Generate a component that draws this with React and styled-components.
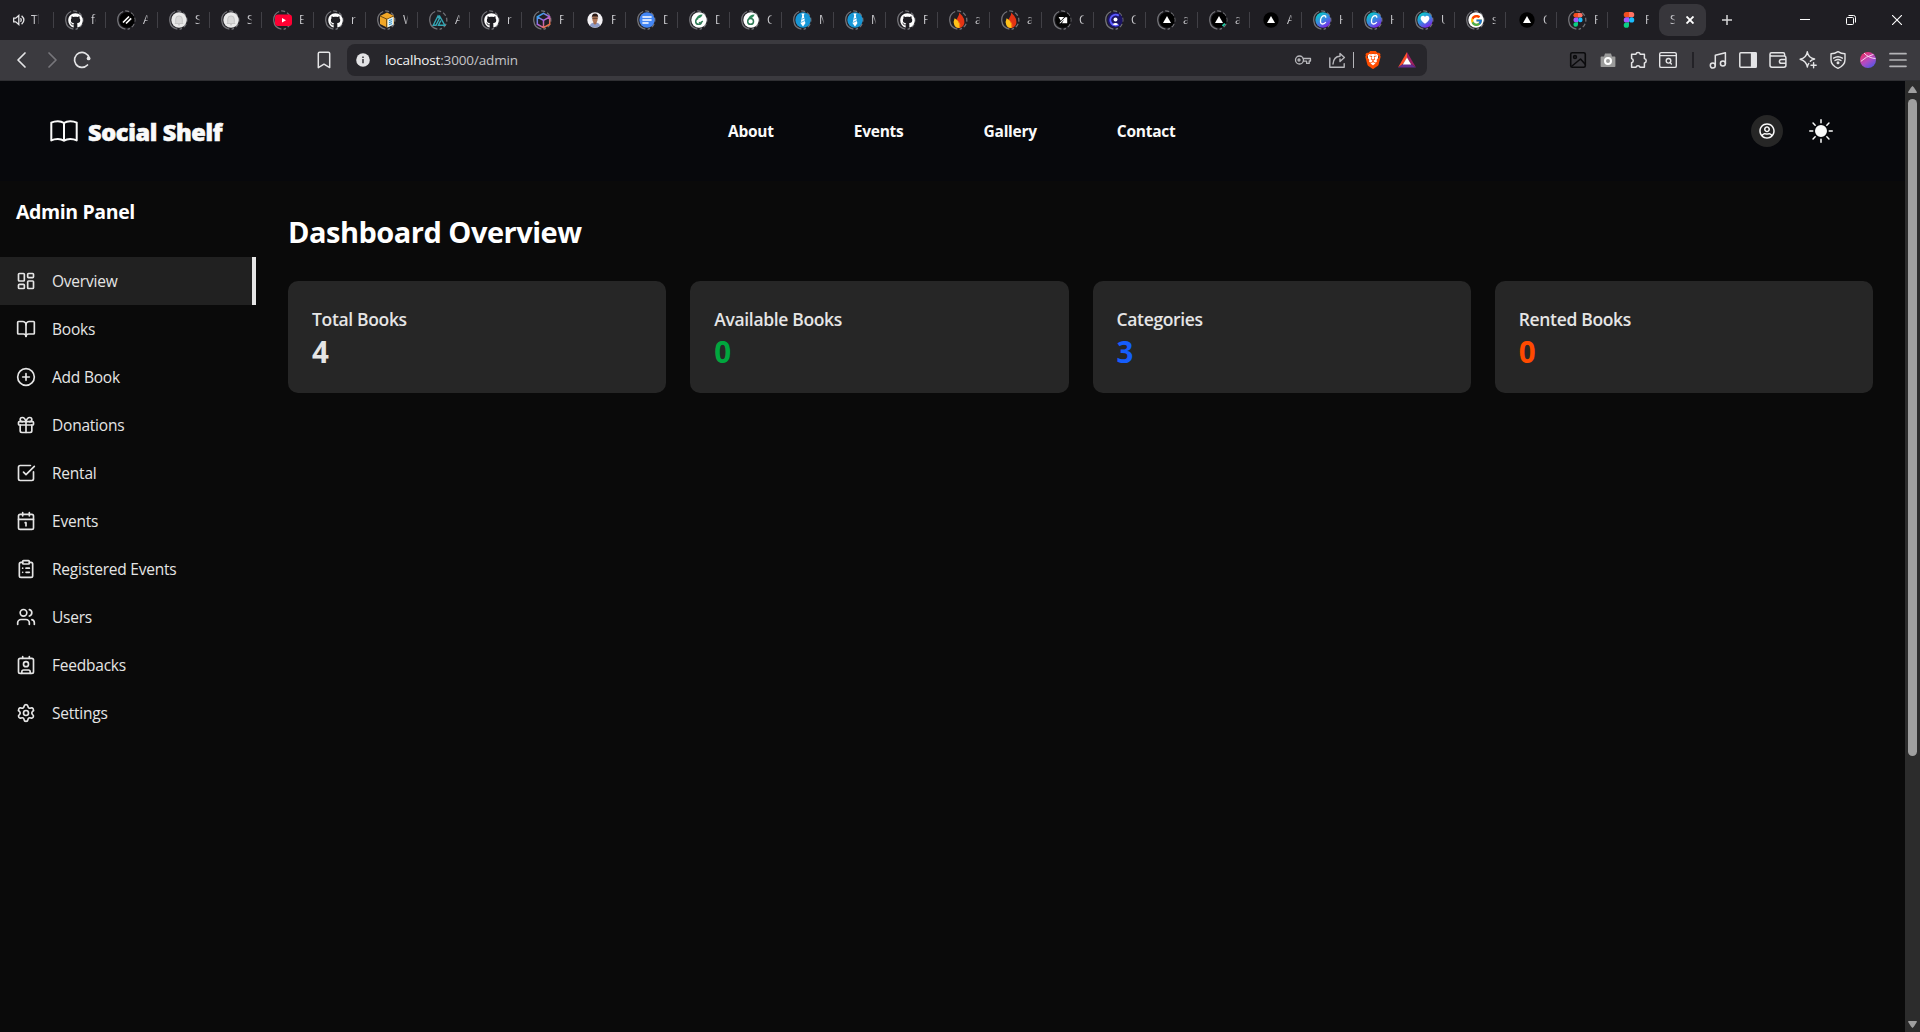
import React from "react";
import styled, { createGlobalStyle } from "styled-components";
import {
  BookOpen, Calendar1, CirclePlus, ClipboardList, Contact, Gift, LayoutDashboard,
  Settings, SquareCheckBig, Users,
} from "lucide-react";
import { BsSunFill } from "react-icons/bs";
import { FaGithub, FaRegUserCircle } from "react-icons/fa";
import { FcGoogle } from "react-icons/fc";
import { SiBrave } from "react-icons/si";

const GlobalStyle = createGlobalStyle`
  *, *::before, *::after { box-sizing: border-box; }
  body {
    margin: 0;
    background: #0a0a0a;
    font-family: "Segoe UI", "Open Sans", "Noto Sans", sans-serif;
    overflow: hidden;
  }
  svg { display: block; flex: none; }
`;

const Window = styled.div`
  display: flex;
  flex-direction: column;
  width: 1920px;
  height: 1032px;
`;

/* ---------- Tab strip ---------- */

const TabStrip = styled.div`
  display: flex;
  align-items: center;
  height: 40px;
  flex: none;
  background: #1f1e23;
`;

const Tab = styled.div`
  display: flex;
  align-items: center;
  gap: ${(p) => p.$gap || 6}px;
  width: ${(p) => p.$width}px;
  height: 16px;
  padding-left: ${(p) => p.$inset || 11}px;
  border-right: 1px solid ${(p) => (p.$last ? "transparent" : "#414046")};
  flex: none;
`;

const TabLabel = styled.span`
  width: ${(p) => p.$width || 6}px;
  overflow: hidden;
  white-space: nowrap;
  font-size: 12px;
  line-height: 18px;
  color: #cfcfd3;
  mask-image: linear-gradient(to right, #000 40%, rgba(0, 0, 0, 0.25));
`;

const Favicon = styled.span`
  display: grid;
  place-items: center;
  width: 20px;
  height: 20px;
  flex: none;
  color: #fff;
  & > svg { grid-area: 1 / 1; }
`;

const ActiveTab = styled.div`
  display: flex;
  align-items: center;
  gap: 11px;
  width: 47px;
  height: 32px;
  padding-left: 11px;
  border-radius: 9px;
  background: #37363b;
  color: #fff;
  flex: none;
`;

const NewTab = styled.div`
  display: grid;
  place-items: center;
  width: 42px;
  color: #d6d6d8;
`;

const WindowControls = styled.div`
  display: flex;
  margin-left: auto;
  color: #fff;
`;

const WindowButton = styled.div`
  display: grid;
  place-items: center;
  width: 46px;
  height: 40px;
`;

const Ring = () => (
  <svg width="20" height="20" viewBox="0 0 20 20" fill="none" stroke="#727277" strokeWidth="1.3">
    <path d="M8.4 19.2A9.35 9.35 0 0 1 6.2 1.5" />
    <path d="M8.2 .85A9.35 9.35 0 0 1 10.6 19.3" strokeDasharray="4 2.2" />
  </svg>
);

const Speaker = () => (
  <svg width="12" height="12" viewBox="0 0 12 12" fill="none" stroke="#e6e6e8" strokeWidth="1.3">
    <path d="M.7 4.2h2L5.8 1.5v9L2.7 7.8h-2z" />
    <path d="M7.6 4.2q1.4 1.8 0 3.6M8.6 1.8q4.6 4.2 0 8.4" />
  </svg>
);

const Disc = ({ fill, children }) => (
  <svg width="16" height="16" viewBox="0 0 16 16">
    <circle cx="8" cy="8" r="7.7" fill={fill} />
    {children}
  </svg>
);

const Slashes = () => (
  <Disc fill="#000">
    <path d="M4 10.5l6-6M7 11.5l5.2-5.2" stroke="#fff" strokeWidth="1.7" />
  </Disc>
);

const Bell = () => (
  <Disc fill="#e9e9e9">
    <path d="M4.7 10.5V7.2a3.3 3.3 0 0 1 6.6 0v3.3l.7 1H4z" fill="#d9d9d9" stroke="#bebebe" strokeWidth=".8" />
    <path d="M7 12.8h2" stroke="#bebebe" />
  </Disc>
);

const YouTube = () => (
  <svg width="17" height="16" viewBox="0 0 17 16">
    <rect x="0" y="2.5" width="17" height="11.5" rx="3" fill="#ff0033" />
    <path d="M7 6v4.6l4-2.3z" fill="#fff" />
  </svg>
);

const Crate = () => (
  <svg width="16" height="16" viewBox="0 0 16 16">
    <path d="M8 .6l7 3.4v8L8 15.4 1 12V4z" fill="#f2a726" />
    <path d="M1 4l7 3.2L15 4" fill="none" stroke="#6d4a16" />
    <path d="M7.6 7v8.4" stroke="#6d4a16" />
    <path d="M8.5 7.2l6-2.4v8l-6 2.6z" fill="#d9f0fb" />
    <path d="M10 8.6l3-1M10 10.6l3-1M10 12.6l3-1" stroke="#3492c4" />
  </svg>
);

const TealPeaks = () => (
  <svg width="16" height="16" viewBox="0 0 16 16" fill="none" stroke="#35a7b5" strokeWidth="1.4">
    <path d="M2.2 13.2L7 4l1.400 2.600-3.400 6.600zM8.200 3.400l5.600 9.800H7.400l2.400-4.600" />
  </svg>
);

const Cube = () => (
  <svg width="17" height="17" viewBox="0 0 17 17" fill="none" strokeWidth="1.5">
    <defs>
      <linearGradient id="cube" gradientUnits="userSpaceOnUse" x1="3" y1="2" x2="14" y2="15">
        <stop offset=".1" stopColor="#38a5ee" />
        <stop offset=".5" stopColor="#b062e0" />
        <stop offset=".9" stopColor="#f0703c" />
      </linearGradient>
    </defs>
    <path d="M8.5 1.3l6.2 3.5v7.4l-6.2 3.5-6.2-3.5V4.8zM2.3 4.8l6.2 3.6 6.2-3.6M8.5 8.4v7.2" stroke="url(#cube)" />
  </svg>
);

const Portrait = () => (
  <Disc fill="#f3f1f4">
    <path d="M2.800 13.700q1-3.300 5.200-3.300t5.200 3.300Q8 17.400 2.800 13.700z" fill="#8e9cc8" />
    <path d="M6.400 9h3.200v2.600L8 12.800 6.400 11.600z" fill="#a56a4c" />
    <ellipse cx="8" cy="6.4" rx="2.700" ry="3.900" fill="#b07656" />
    <path d="M4.900 6Q4.400 1.500 8 1.400T11.100 6L10.400 4.4H5.600z" fill="#2a1a16" />
    <path d="M5.400 6.3h5.200" stroke="#4a3026" strokeWidth=".8" />
  </Disc>
);

const Docs = () => (
  <Disc fill="#4486f4">
    <path d="M3.4 5h9.2M3.4 8h9.2M3.4 11h6.2" stroke="#fff" strokeWidth="1.5" />
  </Disc>
);

const Leaf = ({ open }) => (
  <Disc fill="#fff">
    <circle cx="7.6" cy="9.4" r="2.9" fill="none" stroke="#2f7a56" strokeWidth="1.5" strokeDasharray={open ? "13 5" : "none"} />
    <path d="M5 7.5Q6 2.6 11.6 2.6 10.6 6 6.6 6.6z" fill="#2f8a5c" />
    {open && <path d="M8 10.2l1.4 1.2 2.4-2.4" fill="none" stroke="#2f7a56" strokeWidth="1.2" />}
  </Disc>
);

const Tie = () => (
  <Disc fill="#1797d6">
    <path d="M6.4 1.400h3.2l-.8 2.2 1.600 7.600L8 14.600l-2.400-3.400 1.600-7.600z" fill="#fff" />
    <path d="M6.6 7.4l3-1.4M6 10.4l4-1.8" stroke="#1797d6" strokeWidth=".7" />
  </Disc>
);

const Flame = () => (
  <svg width="16" height="17" viewBox="0 0 16 17">
    <path d="M8.400 .4q1.300 1.600 2.800 3.400 2.200 2.800 2.200 6.200a5.800 5.800 0 0 1-8 5.600Q4 9 6.600 5.400 8.200 3.200 8.400 .4z" fill="#e43414" />
    <path d="M3.600 6.200Q2 9.500 3.200 12.800T8.600 16Q9.600 9.500 3.600 6.200z" fill="#ffc21a" />
    <path d="M8.600 16q2.400-3.400-1.800-7.600 2 4 1.800 7.600z" fill="#f97a10" />
  </svg>
);

const Cursor = () => (
  <Disc fill="#050505">
    <path d="M3.600 5h5.600L5.800 8.800zM10.600 5.200h1.600v6H7zM4.200 11.200l6-6h1.400l-6 6z" fill="#fff" />
  </Disc>
);

const Clerk = () => (
  <Disc fill="#1b1464">
    <path d="M11.800 3.600A5.400 5.400 0 1 0 11.600 12.600" fill="none" stroke="#5b5bff" strokeWidth="2" />
    <circle cx="8.500" cy="7.400" r="2" fill="#fff" />
    <path d="M5.600 12.200q3-2.600 5.600 0-2.600 2-5.600 0z" fill="#fff" />
  </Disc>
);

const Triangle = ({ dot }) => (
  <Disc fill="#000">
    <path d="M8 4l4 7H4z" fill="#fff" />
    {dot && <path d="M11.600 14l2.400-2.400" stroke="#20c7a0" strokeWidth="2" />}
  </Disc>
);

const Gradient = () => (
  <defs>
    <linearGradient id="canva" x1="0" y1="0" x2=".6" y2="1">
      <stop offset=".2" stopColor="#10c0cc" />
      <stop offset=".6" stopColor="#3a86e0" />
      <stop offset="1" stopColor="#7b2be8" />
    </linearGradient>
  </defs>
);

const Canva = () => (
  <Disc fill="url(#canva)">
    <Gradient />
    <path d="M10.600 5.800q.6-2-1.200-2.200Q6.400 3.800 5.600 7.600 5 12 7.600 12q2 0 3.200-2" fill="none" stroke="#fff" strokeWidth="1.300" />
  </Disc>
);

const HeartPin = () => (
  <Disc fill="url(#canva)">
    <path d="M8 11.800Q3.400 8.600 3.600 6q.4-2.200 2.400-2.200 1.400 0 2 1.200.6-1.200 2-1.200 2 0 2.400 2.200.2 2.600-4.400 5.800z" fill="#fff" />
  </Disc>
);

const Figma = ({ size = 14 }) => (
  <svg width={size} height={size} viewBox="0 0 14 14">
    <path d="M4.700 0H7v4.600H4.700a2.300 2.300 0 0 1 0-4.600z" fill="#f24e1e" />
    <path d="M7 0h2.300a2.300 2.300 0 0 1 0 4.600H7z" fill="#ff7262" />
    <path d="M4.700 4.600H7v4.600H4.700a2.300 2.300 0 0 1 0-4.600z" fill="#a259ff" />
    <circle cx="9.300" cy="6.900" r="2.300" fill="#1abcfe" />
    <path d="M4.700 9.200H7v2.300a2.300 2.300 0 1 1-2.300-2.300z" fill="#0acf83" />
  </svg>
);

const Google = () => (
  <>
    <Disc fill="#fff" />
    <FcGoogle size={13} />
  </>
);

const TABS = [
  ["fe", <FaGithub size={15} />], ["Ap", <Slashes />], ["So", <Bell />], ["So", <Bell />],
  ["En", <YouTube />], ["re", <FaGithub size={15} />], ["We", <Crate />], ["Ap", <TealPeaks />],
  ["re", <FaGithub size={15} />], ["Fr", <Cube />], ["Fr", <Portrait />, true], ["Do", <Docs />],
  ["Do", <Leaf open />], ["Ch", <Leaf />], ["Mo", <Tie />], ["Mo", <Tie />],
  ["Fr", <FaGithub size={15} />], ["ap", <Flame />], ["ap", <Flame />], ["Cu", <Cursor />],
  ["Cl", <Clerk />], ["ap", <Triangle />], ["ap", <Triangle dot />], ["Ap", <Triangle />, true],
  ["Ho", <Canva />], ["Ho", <Canva />], ["Un", <HeartPin />], ["so", <Google />],
  ["Ch", <Triangle />, true], ["Fi", <Figma />], ["Fi", <Figma size={16} />, true],
];

/* ---------- Toolbar ---------- */

const Toolbar = styled.div`
  display: flex;
  align-items: center;
  height: 41px;
  flex: none;
  padding: 0 7px;
  background: #3b3a3f;
  border-bottom: 1px solid #2f2f33;
`;

const ToolButton = styled.div`
  display: grid;
  place-items: center;
  width: ${(p) => p.$width || 30}px;
  height: 32px;
  flex: none;
  color: ${(p) => p.$color || "#e4e4e6"};
  & > svg { grid-area: 1 / 1; }
`;

const ToolGroup = styled.div`
  display: flex;
  align-items: center;
  margin-left: auto;
`;

const ToolDivider = styled.div`
  width: 2px;
  height: 16px;
  margin: 0 9px;
  background: #232227;
`;

const AddressBar = styled.div`
  display: flex;
  align-items: center;
  width: 1080px;
  height: 32px;
  margin-left: 8px;
  padding: 0 4px 0 9px;
  border-radius: 8px;
  background: #27262b;
`;

const Address = styled.span`
  margin-left: 15px;
  font-size: 13.5px;
  letter-spacing: -0.15px;
  line-height: 20px;
  color: #c4c4c8;
`;

const Host = styled.span`
  color: #f4f4f5;
`;

const AddressDivider = styled.div`
  width: 1px;
  height: 16px;
  margin-right: 2px;
  background: #b5b5b9;
`;

const Glyph = ({ size = 20, width = 1.4, children }) => (
  <svg width={size} height={size} viewBox="0 0 20 20" fill="none" stroke="currentColor" strokeWidth={width} strokeLinejoin="round" strokeLinecap="round">
    {children}
  </svg>
);

const LeftTools = () => (
  <>
    <ToolButton><Glyph width={1.700}><path d="M13 3L6 10l7 7" /></Glyph></ToolButton>
    <ToolButton $color="#77767b"><Glyph width={1.700}><path d="M7 3l7 7-7 7" /></Glyph></ToolButton>
    <ToolButton>
      <Glyph width={1.700}>
        <path d="M15.500 15A7.500 7.500 0 1 1 17.300 8.200" />
        <circle cx="16.600" cy="8.400" r="1.900" fill="currentColor" stroke="none" />
      </Glyph>
    </ToolButton>
  </>
);

const BookmarkButton = styled(ToolButton)`
  margin-left: 212px;
`;

const AddressActions = () => (
  <ToolGroup>
    <ToolButton $width={34} $color="#b7b7bb">
      <Glyph width={1.300}>
        <circle cx="6.500" cy="10" r="4" />
        <circle cx="6" cy="10" r="1" />
        <path d="M10.200 8.500H17.500V11h-1.300v2.400h-2.600V11.200h-3.300" />
      </Glyph>
    </ToolButton>
    <ToolButton $width={33} $color="#b7b7bb">
      <Glyph width={1.400}>
        <path d="M2.800 8v9.300h14.400v-3.500" />
        <path d="M6 14q.6-7.600 7-7.800V3.400l4.400 4.200L13 11.600V9" />
      </Glyph>
    </ToolButton>
    <AddressDivider />
    <ToolButton $width={34}>
      <svg width="16" height="18" viewBox="0 0 16 18"><path d="M2.500 3h11l-1 8L8 16l-4.500-5z" fill="#fff" /></svg>
      <SiBrave size={18} color="#ff4d00" />
    </ToolButton>
    <ToolButton $width={33}>
      <svg width="18" height="16" viewBox="0 0 18 16">
        <path d="M9 0v6L5 12 0 15.600z" fill="#ff4f2a" />
        <path d="M9 0l9 15.600L13 12 9 6z" fill="#9e1f63" />
        <path d="M0 15.600L5 12h8l5 3.600z" fill="#662d91" />
        <path d="M9 5.600l4.200 7H4.800z" fill="#fff" />
      </svg>
    </ToolButton>
  </ToolGroup>
);

const ExtensionTools = () => (
  <ToolGroup>
    <ToolButton $color="#0b0b0d">
      <Glyph width={1.600}><rect x="2.700" y="2.700" width="14.600" height="14.600" rx="1.600" /><circle cx="7" cy="7" r="1.400" /><path d="M4 16l8.500-7L17 14" /></Glyph>
    </ToolButton>
    <ToolButton $color="#9b9b9b">
      <Glyph><path d="M3.400 6.500H6l1-3h6l1 3h2.600q.8 0 .8.800v9q0 .8-.8.800H3.400q-.8 0-.8-.8v-9q0-.8.800-.8z" fill="currentColor" stroke="none" /><circle cx="10" cy="11" r="3" stroke="#fff" strokeWidth="2" /></Glyph>
    </ToolButton>
    <ToolButton>
      <Glyph width={1.500}><path d="M3.600 4.300h4.200a2.300 2.300 0 0 1 4.500 0h4.100v4.200a2.300 2.300 0 0 1 0 4.500v4.200h-4.300a2.200 2.200 0 0 0-4.200 0H3.600v-4.500a2.100 2.100 0 0 0 0-4.100z" /></Glyph>
    </ToolButton>
    <ToolButton>
      <Glyph width={1.400}><rect x="1.700" y="2.600" width="16.600" height="14.800" rx="1.500" /><path d="M2 5.600h16" /><circle cx="10.500" cy="10.800" r="2.300" /><path d="M12 12.400l1.400 1.600" /></Glyph>
    </ToolButton>
    <ToolDivider />
    <ToolButton>
      <Glyph width={1.500}><circle cx="4.800" cy="15.600" r="2.500" /><circle cx="14.900" cy="13.600" r="2.500" /><path d="M7.300 15.600V5.300L17.400 2.700v10.900" /></Glyph>
    </ToolButton>
    <ToolButton>
      <Glyph width={1.500}><rect x="1.800" y="2.700" width="16.400" height="14.600" rx="1" /><path d="M13.600 3h4.400v14h-4.400z" fill="currentColor" /></Glyph>
    </ToolButton>
    <ToolButton>
      <Glyph width={1.500}><path d="M16.600 6V4.200q0-1.400-1.400-1.400H3.400Q2 2.800 2 4.300v11q0 1.900 1.900 1.900h12q2 0 2-1.900V7.700q0-1.600-1.600-1.600H3.600Q2 6 2 4.500M17.800 9.500h-4.400q-2 0-2 1.900t2 1.900h4.400" /></Glyph>
    </ToolButton>
    <ToolButton>
      <Glyph width={1.400}><path d="M9.300 1.800q1 6 7.300 7.200-3 .7-4.300 2.300M10.800 13.400q-1 1.400-1.500 3.600-1-6.200-7.200-7.800Q8.300 8 9.300 1.800" /><path d="M15.600 12.600v5.200M13 15.200h5.200" /></Glyph>
    </ToolButton>
    <ToolButton>
      <Glyph width={1.400}><path d="M10 1.600q3.200 2.200 7 2.200v6q0 5.600-7 8.600-7-3-7-8.600v-6q3.800 0 7-2.200z" /><path d="M5.600 8.200q4.400-3 8.800 0M7 10.500q3-2 6 0" /><circle cx="10" cy="12.800" r=".8" fill="currentColor" /></Glyph>
    </ToolButton>
    <ToolButton>
      <svg width="16" height="16" viewBox="0 0 16 16">
        <defs>
          <linearGradient id="orb" x1=".2" y1=".1" x2=".8" y2="1">
            <stop offset="0" stopColor="#e8336e" />
            <stop offset=".5" stopColor="#b24bc4" />
            <stop offset="1" stopColor="#4b57e6" />
          </linearGradient>
        </defs>
        <circle cx="8" cy="8" r="8" fill="url(#orb)" />
        <path d="M.8 9.400Q6 4.400 13.400 2.400M4 1Q8.400 6 15.600 6.600" fill="none" stroke="#f6d5f0" strokeWidth="1" />
      </svg>
    </ToolButton>
    <ToolButton $color="#b4b4b7">
      <Glyph width={1.700}><path d="M2 3.700h16M2 10h16M2 16.300h16" /></Glyph>
    </ToolButton>
  </ToolGroup>
);

/* ---------- Page ---------- */

const Viewport = styled.div`
  display: flex;
  flex: 1;
  min-height: 0;
`;

const Page = styled.div`
  display: flex;
  flex-direction: column;
  flex: 1;
  background: #0a0a0a;
`;

const Header = styled.header`
  display: flex;
  align-items: center;
  height: 100px;
  padding: 0 72px 0 50px;
  background: #07080c;
  color: #fafafa;
`;

const Logo = styled.div`
  display: flex;
  align-items: center;
  gap: 10px;
  width: 678px;
`;

const LogoText = styled.span`
  padding-top: 2px;
  font-size: 23.5px;
  font-weight: 800;
  letter-spacing: -0.35px;
  line-height: 32px;
  -webkit-text-stroke: 0.6px currentColor;
`;

const Nav = styled.nav`
  display: flex;
  gap: 80px;
`;

const NavLink = styled.a`
  font-size: 15.5px;
  font-weight: 700;
  letter-spacing: -0.25px;
  line-height: 24px;
`;

const HeaderActions = styled.div`
  display: flex;
  align-items: center;
  gap: 26px;
  margin-left: auto;
`;

const ProfileButton = styled.div`
  display: grid;
  place-items: center;
  width: 32px;
  height: 32px;
  border-radius: 50%;
  background: #262626;
`;

const Body = styled.div`
  display: flex;
  flex: 1;
`;

const Sidebar = styled.aside`
  width: 256px;
  flex: none;
`;

const SidebarTitle = styled.h2`
  margin: 0 0 30px;
  padding: 16px 16px 0;
  font-size: 19.5px;
  font-weight: 700;
  letter-spacing: -0.38px;
  line-height: 30px;
  color: #fff;
`;

const MenuItem = styled.div`
  display: flex;
  align-items: center;
  gap: 16px;
  height: 48px;
  padding-left: 16px;
  border-right: 4px solid ${(p) => (p.$active ? "#e5e5e5" : "transparent")};
  background: ${(p) => (p.$active ? "#212121" : "transparent")};
  background-clip: padding-box;
  color: #e5e5e5;
  font-size: 15.5px;
  letter-spacing: -0.22px;
  line-height: 24px;
`;

const Main = styled.main`
  flex: 1;
  padding: 33px 32px;
`;

const Title = styled.h1`
  margin: 0 0 31px;
  font-size: 29px;
  font-weight: 700;
  letter-spacing: -0.5px;
  line-height: 36px;
  color: #fff;
`;

const Cards = styled.div`
  display: grid;
  grid-template-columns: repeat(4, 1fr);
  gap: 24px;
`;

const Card = styled.div`
  height: 112px;
  padding: 24px;
  border-radius: 10px;
  background: #262626;
`;

const CardLabel = styled.div`
  font-size: 17.5px;
  font-weight: 600;
  letter-spacing: -0.34px;
  line-height: 28px;
  color: #e5e5e5;
`;

const CardValue = styled.div`
  padding-top: 1px;
  font-size: 29.5px;
  font-weight: 700;
  line-height: 36px;
  color: ${(p) => p.$color};
`;

const Scrollbar = styled.div`
  display: flex;
  flex-direction: column;
  align-items: center;
  width: 15px;
  padding: 5px 0 4px;
  background: #2c2c2c;
`;

const Thumb = styled.div`
  width: 9px;
  height: 657px;
  margin: 6px 0 auto;
  border-radius: 5px;
  background: #9f9f9f;
`;

const LogoMark = () => (
  <svg width="28" height="22" viewBox="0 0 28 22" fill="none" stroke="currentColor" strokeWidth="2" strokeLinejoin="round">
    <path d="M14 3Q11.500 1.200 7.800 1.200T1.300 2.600V20.400Q4 19 7.800 19t6.200 1.800q2.500-1.800 6.200-1.800t6.500 1.400V2.600Q24 1.200 20.200 1.200T14 3zV20.600" />
  </svg>
);

const MENU = [
  ["Overview", LayoutDashboard], ["Books", BookOpen], ["Add Book", CirclePlus],
  ["Donations", Gift], ["Rental", SquareCheckBig], ["Events", Calendar1],
  ["Registered Events", ClipboardList], ["Users", Users], ["Feedbacks", Contact],
  ["Settings", Settings],
];

const STATS = [
  ["Total Books", 4, "#e5e5e5"], ["Available Books", 0, "#00a63e"],
  ["Categories", 3, "#155dfc"], ["Rented Books", 0, "#ff4a00"],
];

export default function App() {
  return (
    <Window>
      <GlobalStyle />
      <TabStrip>
        <Tab $width={54} $inset={13}><Speaker /><TabLabel $width={8}>Th</TabLabel></Tab>
        {TABS.map(([label, icon, loaded], i) => (
          <Tab key={i} $width={i < 24 ? 52 : 51} $last={i === TABS.length - 1}>
            <Favicon>{!loaded && <Ring />}{icon}</Favicon>
            <TabLabel $width={i < 24 ? 5 : 3.5}>{label}</TabLabel>
          </Tab>
        ))}
        <ActiveTab>
          <TabLabel $width={4.5}>So</TabLabel>
          <svg width="8" height="8" viewBox="0 0 8 8" stroke="currentColor" strokeWidth="1.900"><path d="M.5 .5l7 7M7.500 .5l-7 7" /></svg>
        </ActiveTab>
        <NewTab>
          <svg width="10" height="10" viewBox="0 0 10 10" stroke="currentColor" strokeWidth="1.500"><path d="M5 0v10M0 5h10" /></svg>
        </NewTab>
        <WindowControls>
          <WindowButton><svg width="10" height="10" stroke="currentColor"><path d="M0 4.500h10" /></svg></WindowButton>
          <WindowButton>
            <svg width="10" height="10" fill="none" stroke="currentColor"><rect x=".5" y="2.500" width="7" height="7" rx="1" /><path d="M2.500 .5h5q2 0 2 2v5" /></svg>
          </WindowButton>
          <WindowButton><svg width="10" height="10" stroke="currentColor" strokeWidth="1.100"><path d="M0 0l10 10M10 0L0 10" /></svg></WindowButton>
        </WindowControls>
      </TabStrip>

      <Toolbar>
        <LeftTools />
        <BookmarkButton>
          <Glyph width={1.500}><path d="M4.300 3.600q0-1.300 1.300-1.300h8.800q1.300 0 1.300 1.300v14L10 14.200l-5.700 3.400z" /></Glyph>
        </BookmarkButton>
        <AddressBar>
          <svg width="14" height="14" viewBox="0 0 14 14"><circle cx="7" cy="7" r="6.800" fill="#e3e3e5" /><path d="M7 6v4.200M7 3.500v1.500" stroke="#27262b" strokeWidth="1.400" /></svg>
          <Address><Host>localhost</Host>:3000/admin</Address>
          <AddressActions />
        </AddressBar>
        <ExtensionTools />
      </Toolbar>

      <Viewport>
        <Page>
          <Header>
            <Logo><LogoMark /><LogoText>Social Shelf</LogoText></Logo>
            <Nav>
              {["About", "Events", "Gallery", "Contact"].map((item) => <NavLink key={item}>{item}</NavLink>)}
            </Nav>
            <HeaderActions>
              <ProfileButton><FaRegUserCircle size={16} /></ProfileButton>
              <BsSunFill size={24} />
            </HeaderActions>
          </Header>
          <Body>
            <Sidebar>
              <SidebarTitle>Admin Panel</SidebarTitle>
              {MENU.map(([label, Icon], i) => (
                <MenuItem key={label} $active={i === 0}><Icon size={20} />{label}</MenuItem>
              ))}
            </Sidebar>
            <Main>
              <Title>Dashboard Overview</Title>
              <Cards>
                {STATS.map(([label, value, color]) => (
                  <Card key={label}>
                    <CardLabel>{label}</CardLabel>
                    <CardValue $color={color}>{value}</CardValue>
                  </Card>
                ))}
              </Cards>
            </Main>
          </Body>
        </Page>
        <Scrollbar>
          <svg width="9" height="7" fill="#9f9f9f"><path d="M4.500 0Q5.200 0 9 6.200 9 7 8 7H1Q0 7 0 6.200 3.800 0 4.500 0z" /></svg>
          <Thumb />
          <svg width="9" height="7" fill="#9f9f9f"><path d="M4.500 7Q3.800 7 0 .8 0 0 1 0h7q1 0 1 .8Q5.200 7 4.500 7z" /></svg>
        </Scrollbar>
      </Viewport>
    </Window>
  );
}
